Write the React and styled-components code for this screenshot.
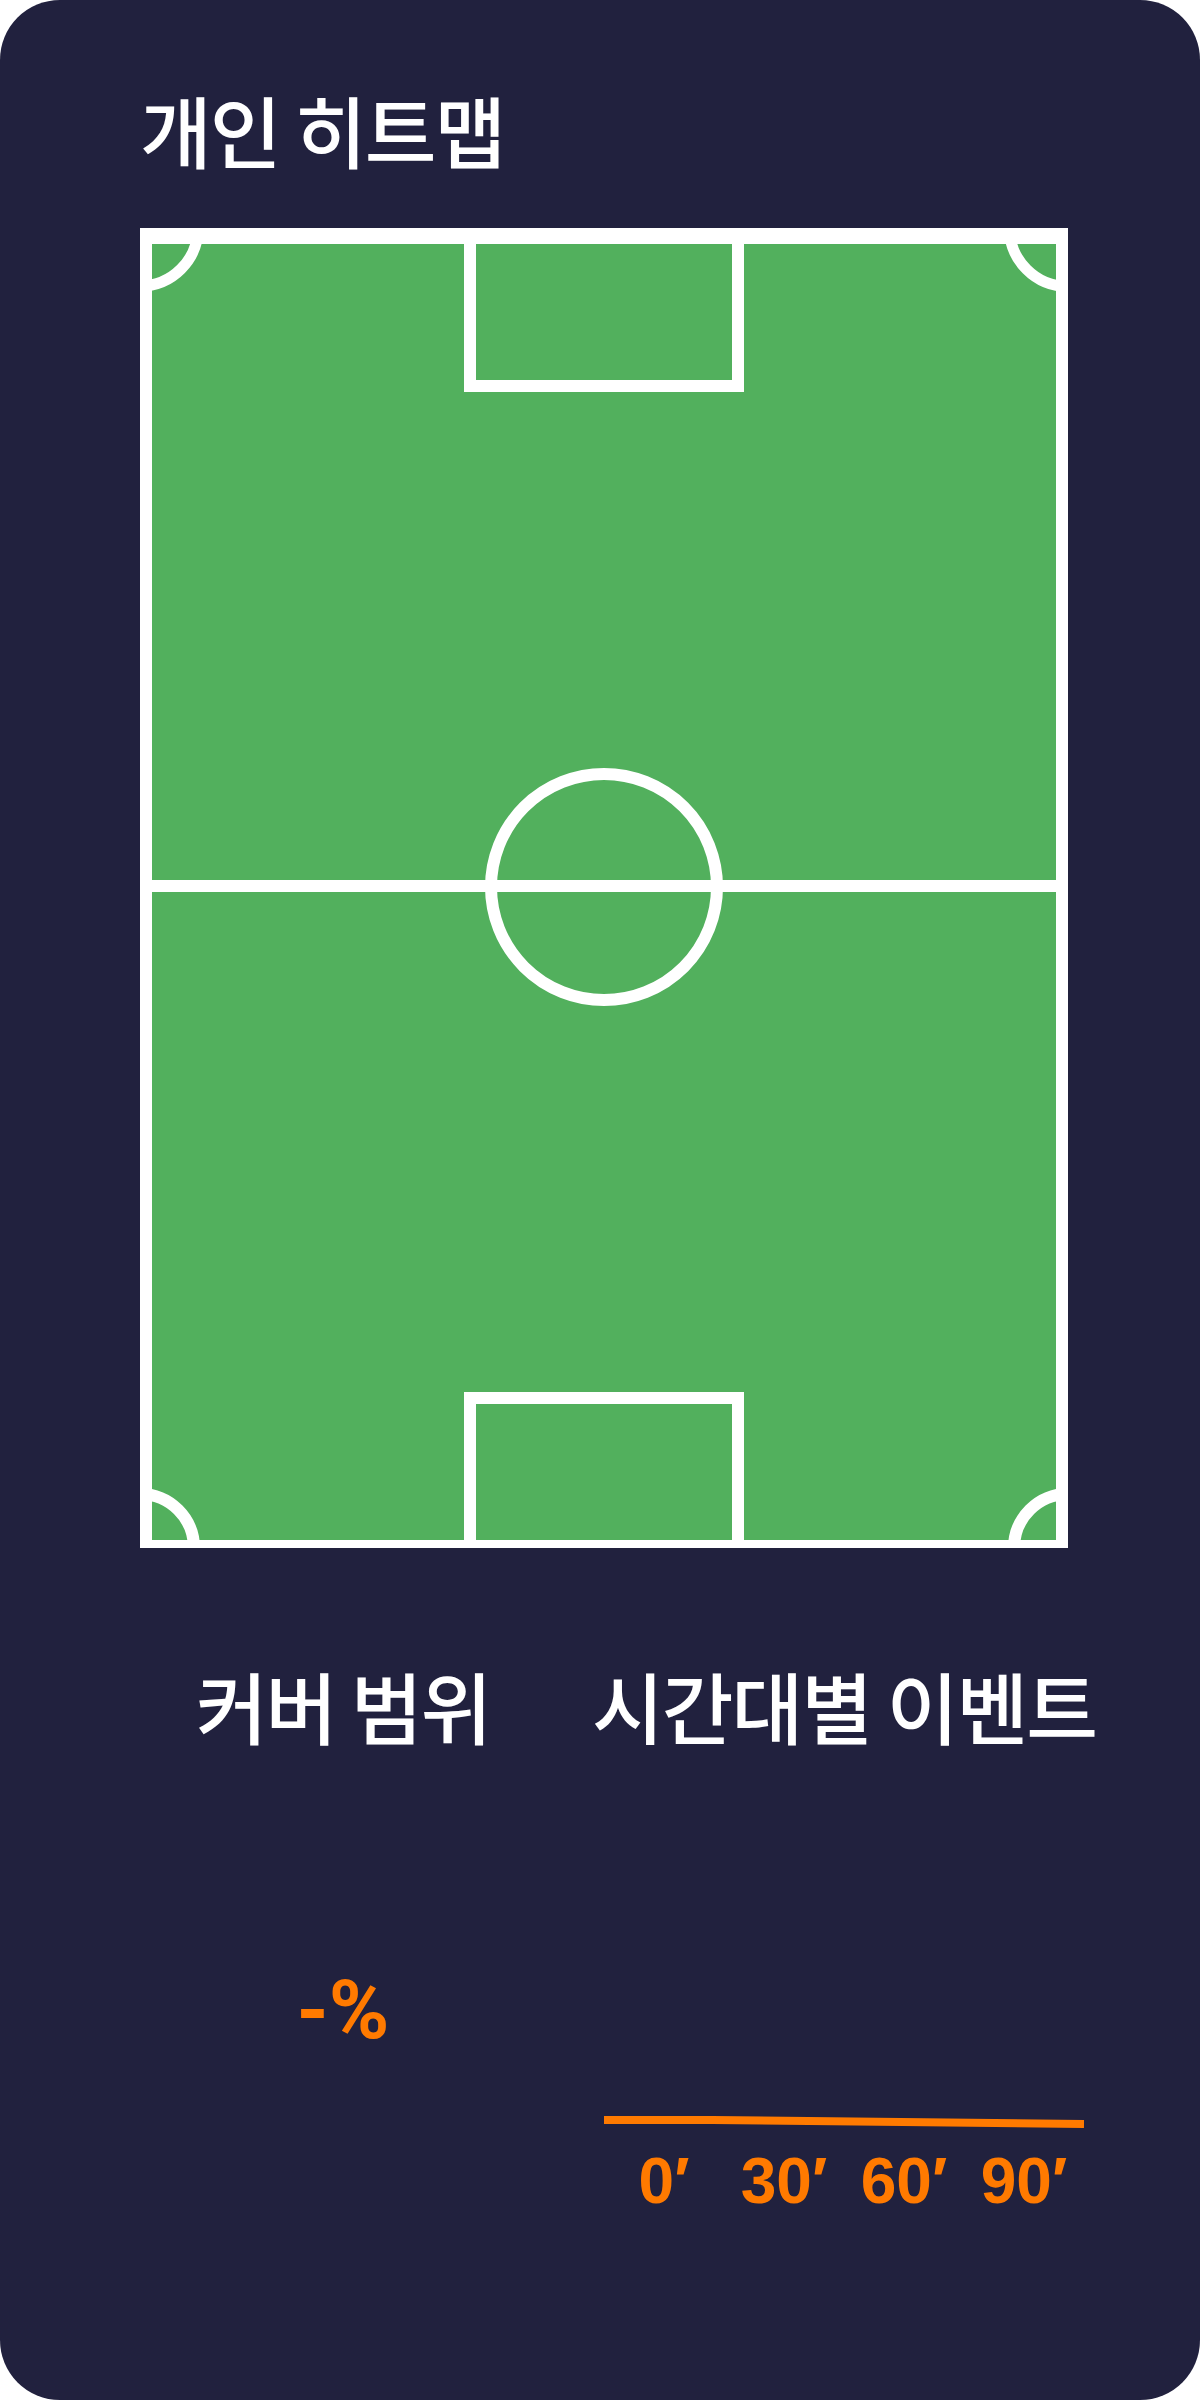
import React from "react";
import styled, { createGlobalStyle } from "styled-components";

const GlobalStyle = createGlobalStyle`
  html, body {
    margin: 0;
    padding: 0;
    background: #ffffff;
  }
  * { box-sizing: border-box; }
`;

const Card = styled.main`
  width: 1200px;
  min-height: 2400px;
  background: #21213e;
  border-radius: 60px;
  padding: 90px 0 0 140px;
  display: flex;
  flex-direction: column;
  font-family: "Noto Sans CJK KR", "Noto Sans", sans-serif;
  color: #ffffff;
`;

const Title = styled.h1`
  margin: 0;
  font-size: 78px;
  line-height: 78px;
  font-weight: 500;
  letter-spacing: -2px;
  color: #ffffff;
`;

const PitchFrame = styled.div`
  margin-top: 60px;
  width: 928px;
  height: 1320px;
  svg {
    display: block;
  }
`;

const StatsRow = styled.section`
  margin-top: 118px;
  display: flex;
  gap: 48px;
`;

const StatColumn = styled.div`
  width: ${(p) => p.$width}px;
  display: flex;
  flex-direction: column;
  align-items: center;
`;

const StatHeading = styled.h2`
  margin: 0;
  font-size: 78px;
  line-height: 78px;
  font-weight: 500;
  letter-spacing: -2px;
  color: #ffffff;
  white-space: nowrap;
`;

const PercentValue = styled.div`
  margin-top: 225px;
  font-family: Roboto, "Liberation Sans", sans-serif;
  font-weight: 700;
  font-size: 82px;
  line-height: 82px;
  color: #ff7a00;
`;

const TimelineChart = styled.div`
  margin-top: 372px;
  width: 480px;
  display: flex;
  flex-direction: column;
  svg {
    display: block;
  }
`;

const TickRow = styled.div`
  margin-top: 17px;
  display: flex;
`;

const Tick = styled.span`
  flex: 1;
  text-align: center;
  font-family: "Liberation Sans", "DejaVu Sans", sans-serif;
  font-weight: 700;
  font-size: 64px;
  line-height: 64px;
  color: #ff7a00;
  white-space: nowrap;
`;

const GREEN = "#52b05d";
const WHITE = "#ffffff";

function Pitch() {
  return (
    <svg width="928" height="1320" viewBox="0 0 928 1320">
      <rect x="0" y="0" width="928" height="1320" fill={WHITE} />
      <rect x="12" y="16" width="904" height="1296" fill={GREEN} />
      {/* halfway line */}
      <rect x="0" y="652" width="928" height="12" fill={WHITE} />
      {/* centre circle */}
      <circle cx="464" cy="659" r="113" fill="none" stroke={WHITE} strokeWidth="12" />
      {/* penalty boxes */}
      <path d="M330 16 V158 H598 V16" fill="none" stroke={WHITE} strokeWidth="12" />
      <path d="M330 1312 V1170 H598 V1312" fill="none" stroke={WHITE} strokeWidth="12" />
      {/* corner arcs */}
      <circle cx="0" cy="0" r="58" fill="none" stroke={WHITE} strokeWidth="11" />
      <circle cx="928" cy="0" r="58.5" fill="none" stroke={WHITE} strokeWidth="11" />
      <circle cx="0" cy="1320" r="54" fill="none" stroke={WHITE} strokeWidth="12" />
      <circle cx="928" cy="1320" r="54" fill="none" stroke={WHITE} strokeWidth="12" />
    </svg>
  );
}

const ticks = ["0′", "30′", "60′", "90′"];

export default function App() {
  return (
    <>
      <GlobalStyle />
      <Card>
        <Title>개인 히트맵</Title>
        <PitchFrame>
          <Pitch />
        </PitchFrame>
        <StatsRow>
          <StatColumn $width={406}>
            <StatHeading>커버 범위</StatHeading>
            <PercentValue>-%</PercentValue>
          </StatColumn>
          <StatColumn $width={500}>
            <StatHeading>시간대별 이벤트</StatHeading>
            <TimelineChart>
              <svg width="480" height="16" viewBox="0 0 480 16">
                <polyline
                  points="0,4 108,4 480,8"
                  fill="none"
                  stroke="#ff7a00"
                  strokeWidth="8"
                />
              </svg>
              <TickRow>
                {ticks.map((t) => (
                  <Tick key={t}>{t}</Tick>
                ))}
              </TickRow>
            </TimelineChart>
          </StatColumn>
        </StatsRow>
      </Card>
    </>
  );
}
